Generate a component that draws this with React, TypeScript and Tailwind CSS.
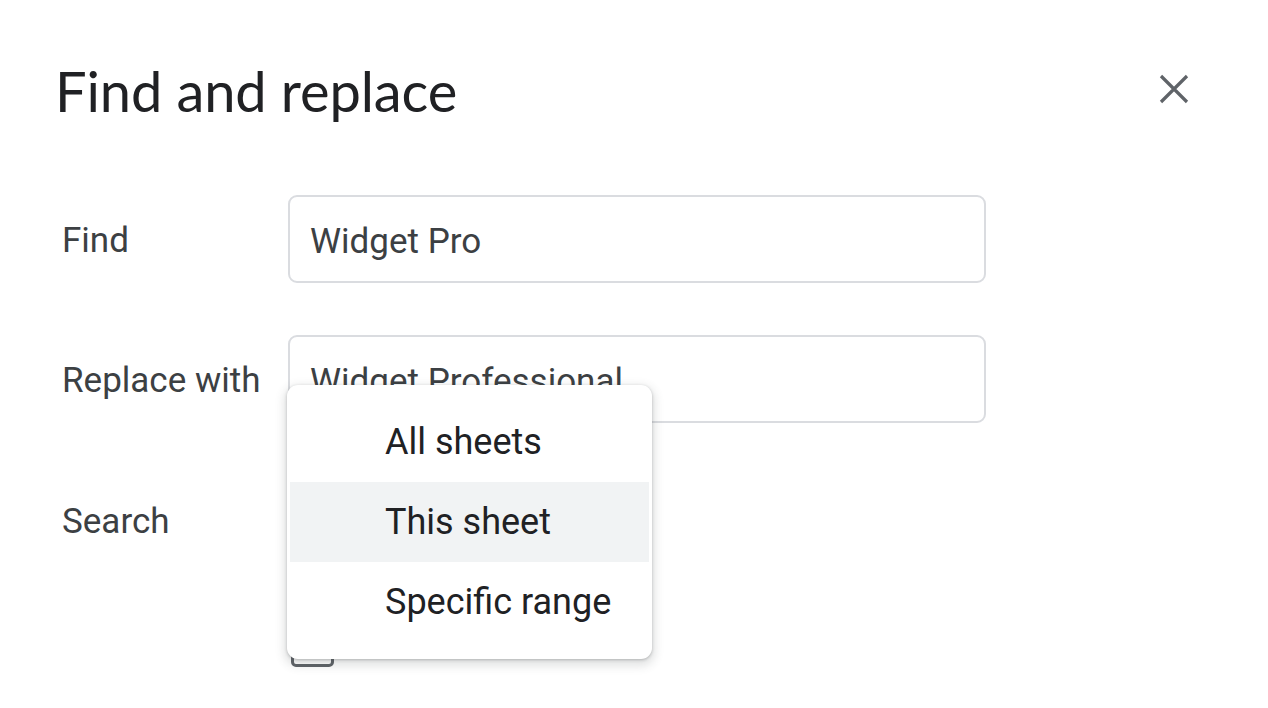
import { useState } from 'react'

const sans = 'font-["Roboto","Liberation_Sans",sans-serif]'

function CloseIcon() {
  return (
    <svg width="40" height="40" viewBox="0 0 40 40" className="text-[#5f6368]" aria-hidden="true">
      <path d="M7 7 L33 33 M33 7 L7 33" stroke="currentColor" strokeWidth="3.2" strokeLinecap="butt" fill="none" />
    </svg>
  )
}

function Field({ label, value }: { label: string; value: string }) {
  return (
    <div className="flex items-center">
      <label className="w-[233px] shrink-0 pl-[7px] pt-[4px] text-[35px] text-[#3c4043]">{label}</label>
      <div className="w-[698px] h-[88px] rounded-[9px] border-2 border-[#dadce0] bg-white flex items-center px-[20px] pt-[4px]">
        <span className="text-[35px] text-[#3c4043] leading-none">{value}</span>
      </div>
    </div>
  )
}

// Scope menu, opened from the "Search" select; sits over the form.
function ScopeMenu() {
  const items = ['All sheets', 'This sheet', 'Specific range']
  const [active] = useState(1)
  return (
    <div className="absolute left-[287px] top-[190px] w-[365px] rounded-[11px] bg-white py-[17px] shadow-[0_4px_10px_3px_rgba(60,64,67,0.15),0_1px_3px_rgba(60,64,67,0.3)]">
      {items.map((it, i) => (
        <div
          key={it}
          className={`mx-[3px] h-[80px] flex items-center pl-[95px] text-[36px] text-[#202124] ${i === active ? 'bg-[#f1f3f4]' : ''}`}
        >
          {it}
        </div>
      ))}
    </div>
  )
}

export default function App() {
  return (
    <div className={`w-[1268px] h-[708px] overflow-hidden bg-white ${sans}`}>
      <div className="flex items-start justify-between pl-[55px] pr-[74px] pt-[55px]">
        <h1 className='font-["Lato","Open_Sans",sans-serif] text-[56px] leading-[72px] text-[#202124] tracking-[-0.1px]'>
          Find and replace
        </h1>
        <button className="mt-[14px]" aria-label="Close">
          <CloseIcon />
        </button>
      </div>

      <div className="relative mt-[68px] pl-[55px] flex flex-col gap-[52px]">
        <Field label="Find" value="Widget Pro" />
        <Field label="Replace with" value="Widget Professional" />
        <div className="flex items-center h-[88px]">
          <span className="w-[233px] shrink-0 pl-[7px] pt-[6px] text-[35px] text-[#3c4043]">Search</span>
        </div>
        <div className="mt-[9px] flex items-center">
          <span className="ml-[236px] w-[43px] h-[43px] rounded-[5px] border-[3px] border-[#5f6368]" />
        </div>
        <ScopeMenu />
      </div>
    </div>
  )
}
